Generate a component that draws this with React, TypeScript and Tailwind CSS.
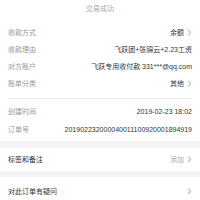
import React from 'react';

const Chevron = ({ className = '' }: { className?: string }) => (
  <svg width="5" height="7" viewBox="0 0 5 7" className={className} fill="none">
    <polyline points="1,0.8 4,3.5 1,6.2" stroke="#999" strokeWidth="0.9" />
  </svg>
);

const Row = ({ label, value, arrow, h = 'h-[17px]' }: { label: string; value: React.ReactNode; arrow?: boolean; h?: string }) => (
  <div className={`flex items-center justify-between px-2 ${h}`}>
    <span className="text-[#999]">{label}</span>
    <span className="flex items-center gap-[3px] text-[#333]">
      {value}
      {arrow && <Chevron />}
    </span>
  </div>
);

export default function App() {
  return (
    <div
      className="w-[200px] h-[200px] overflow-hidden bg-white text-[7px] leading-none"
      style={{ fontFamily: '"Liberation Sans", "Noto Sans CJK SC", sans-serif' }}
    >
      <div className="h-[16px] flex items-center justify-center text-[#aaa]">交易成功</div>
      <div className="h-[8px]" />
      <Row label="收款方式" value="余额" arrow />
      <Row label="收款理由" value="飞跃团+张锦云+2.23工资" />
      <Row label="对方账户" value="飞跃专用收付款 331***@qq.com" />
      <Row label="账单分类" value="其他" arrow />
      <div className="h-[6px]" />
      <div className="mx-2 h-px bg-[#ebebeb]" />
      <div className="h-[3px]" />
      <Row label="创建时间" value="2019-02-23 18:02" h="h-[18px]" />
      <Row label="订单号" value="201902232000040011100920001894919" h="h-[18px]" />
      <div className="h-[3px]" />
      <div className="h-[7px] bg-[#f4f4f6]" />
      <div className="flex items-center justify-between px-2 h-[23px]">
        <span className="text-[#333]">标签和备注</span>
        <span className="flex items-center gap-[3px] text-[#aaa]">
          添加
          <Chevron />
        </span>
      </div>
      <div className="h-[6px] bg-[#f4f4f6]" />
      <div className="flex items-center justify-between px-2 h-[28px]">
        <span className="text-[#333]">对此订单有疑问</span>
        <Chevron />
      </div>
    </div>
  );
}
